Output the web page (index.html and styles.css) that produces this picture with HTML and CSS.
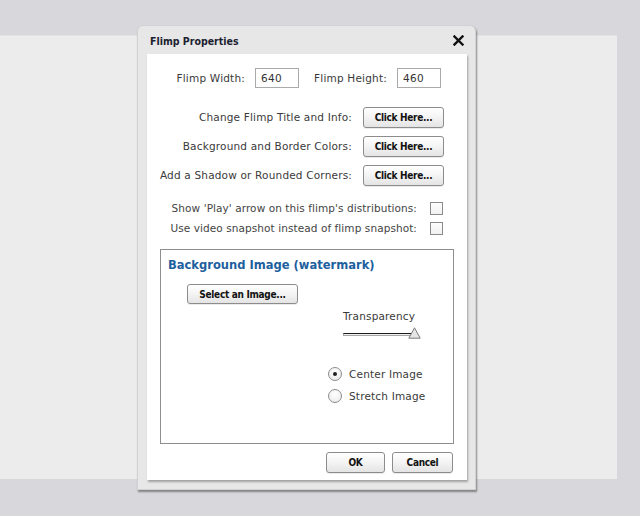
FILE: index.html
```html
<!DOCTYPE html>
<html>
<head>
<meta charset="utf-8">
<title>Flimp Properties</title>
<link rel="stylesheet" href="styles.css">
</head>
<body>
<div class="stage"></div>

<div class="dialog">
  <div class="titlebar">
    <span class="title">Flimp Properties</span>
    <svg class="close" width="11" height="11" viewBox="0 0 11 11"><path d="M1.5 1.5 L9.5 9.5 M9.5 1.5 L1.5 9.5" stroke="#111" stroke-width="2.4" stroke-linecap="square"/></svg>
  </div>

  <div class="sheet">
    <div class="row row-size">
      <label class="lbl">Flimp Width:</label>
      <input class="num" type="text" value="640">
      <label class="lbl lbl-second">Flimp Height:</label>
      <input class="num" type="text" value="460">
    </div>

    <div class="row row-btn first">
      <span class="lbl">Change Flimp Title and Info:</span>
      <button class="btn btn-click">Click Here...</button>
    </div>
    <div class="row row-btn">
      <span class="lbl">Background and Border Colors:</span>
      <button class="btn btn-click">Click Here...</button>
    </div>
    <div class="row row-btn">
      <span class="lbl">Add a Shadow or Rounded Corners:</span>
      <button class="btn btn-click">Click Here...</button>
    </div>

    <div class="row row-check first">
      <span class="lbl">Show 'Play' arrow on this flimp's distributions:</span>
      <span class="check"></span>
    </div>
    <div class="row row-check">
      <span class="lbl">Use video snapshot instead of flimp snapshot:</span>
      <span class="check"></span>
    </div>

    <div class="watermark">
      <h2 class="wm-title">Background Image (watermark)</h2>
      <button class="btn btn-select">Select an Image...</button>
      <div class="transparency">
        <span class="lbl">Transparency</span>
        <div class="slider">
          <span class="track"></span>
          <svg class="thumb" width="13" height="12" viewBox="0 0 13 12"><path d="M6.5 0.8 L12.2 11.2 L0.8 11.2 Z" fill="#e6e6e6" stroke="#7a7a7a" stroke-width="1" stroke-linejoin="round"/></svg>
        </div>
      </div>
      <div class="radios">
        <div class="radio-row"><span class="radio on"></span><span class="lbl">Center Image</span></div>
        <div class="radio-row"><span class="radio"></span><span class="lbl">Stretch Image</span></div>
      </div>
    </div>

    <div class="footer">
      <button class="btn btn-ok">OK</button>
      <button class="btn btn-cancel">Cancel</button>
    </div>
  </div>
</div>
</body>
</html>
```

FILE: styles.css
```css
html, body {
  margin: 0;
  padding: 0;
}

body {
  width: 640px;
  height: 516px;
  background: #d8d8dc;
  font-family: "DejaVu Sans", Verdana, sans-serif;
  overflow: hidden;
  position: relative;
}

/* light work area behind the modal */
.stage {
  margin-top: 35px;
  width: 617px;
  height: 444px;
  background: #ececec;
  border-top: 1px solid #e2e2e4;
  box-sizing: border-box;
}

/* modal window */
.dialog {
  position: absolute;
  left: 137px;
  top: 25px;
  width: 339px;
  height: 465px;
  box-sizing: border-box;
  background: #e7e7e7;
  border: 1px solid #d2d2d4;
  border-radius: 6px 6px 0 0;
  box-shadow: 1px 2px 2px rgba(0, 0, 0, 0.4);
  display: flex;
  flex-direction: column;
}

.titlebar {
  height: 28px;
  display: flex;
  align-items: center;
  justify-content: space-between;
  padding: 0 11px 0 12px;
}

.title,
.btn,
.wm-title {
  font-family: "DejaVu Sans Condensed", "DejaVu Sans", sans-serif;
  font-stretch: condensed;
  font-weight: bold;
}

.title {
  font-size: 10.5px;
  color: #1b2130;
  margin-top: 1px;
}

.close {
  display: block;
  margin-top: 1px;
}

/* white content sheet */
.sheet {
  margin: 0 8px 0 9px;
  height: 426px;
  background: #fff;
  box-shadow: 1px 2px 2px rgba(0, 0, 0, 0.3);
  display: flex;
  flex-direction: column;
}

.row {
  display: flex;
  align-items: center;
  justify-content: flex-end;
}

.lbl {
  font-size: 10.5px;
  letter-spacing: 0.18px;
  color: #3a3a3a;
  white-space: nowrap;
}

.row-check .lbl {
  letter-spacing: 0.08px;
  color: #444;
}

.row-size {
  margin-top: 14px;
  padding-right: 26px;
  height: 20px;
}

.row-size .lbl {
  letter-spacing: 0.2px;
}

.num {
  width: 44px;
  height: 20px;
  box-sizing: border-box;
  margin: 0 0 0 10px;
  padding: 0 0 0 5px;
  border: 1px solid #aaa;
  font-family: "DejaVu Sans", Verdana, sans-serif;
  font-size: 10.5px;
  letter-spacing: 0.3px;
  color: #333;
  outline: none;
}

.lbl-second {
  margin-left: 15px;
}

.row-btn {
  padding-right: 23px;
  height: 22px;
  margin-top: 7px;
}

.row-btn.first {
  margin-top: 18px;
}

.btn {
  box-sizing: border-box;
  height: 21px;
  padding: 0;
  border: 1px solid #8c8c8c;
  border-radius: 3px;
  background: linear-gradient(#ffffff 0%, #f5f5f5 45%, #e4e4e4 100%);
  box-shadow: 0 1px 0 rgba(0, 0, 0, 0.08);
  font-size: 10px;
  letter-spacing: -0.3px;
  color: #121212;
  cursor: pointer;
}

.btn-click {
  width: 81px;
  margin-left: 11px;
}

.row-check {
  padding-right: 24px;
  height: 14px;
  margin-top: 6px;
}

.row-check.first {
  margin-top: 15px;
}

.check {
  width: 13px;
  height: 13px;
  box-sizing: border-box;
  margin-left: 13px;
  border: 1px solid #8a8a8a;
  background: linear-gradient(#fdfdfd, #f1f1f1);
}

/* background image group */
.watermark {
  margin: 14px 13px 0 13px;
  height: 195px;
  box-sizing: border-box;
  border: 1px solid #8e8e8e;
  display: flex;
  flex-direction: column;
  align-items: flex-start;
}

.wm-title {
  margin: 7px 0 0 7px;
  font-size: 12.8px;
  line-height: 15px;
  color: #1e5f9e;
}

.btn-select {
  width: 111px;
  height: 20px;
  margin: 12px 0 0 26px;
}

.transparency {
  margin: 6px 0 0 182px;
  display: flex;
  flex-direction: column;
}

.slider {
  position: relative;
  width: 78px;
  height: 14px;
  margin-top: 4px;
}

.track {
  display: block;
  margin-top: 7px;
  width: 72px;
  height: 3px;
  box-sizing: border-box;
  border: 1px solid #a5a5a5;
  border-top: 1px solid #1a1a1a;
  background: #f2f2f2;
}

.thumb {
  position: absolute;
  left: 65px;
  top: 1px;
}

.radios {
  margin: 27px 0 0 167px;
  display: flex;
  flex-direction: column;
  gap: 8px;
}

.radio-row {
  display: flex;
  align-items: center;
  gap: 7px;
}

.radio {
  width: 14px;
  height: 14px;
  box-sizing: border-box;
  border: 1px solid #8c8c8c;
  border-radius: 50%;
  background: radial-gradient(circle at 50% 35%, #ffffff, #e9e9e9);
  position: relative;
}

.radio.on::after {
  content: "";
  position: absolute;
  left: 4px;
  top: 4px;
  width: 4px;
  height: 4px;
  border-radius: 50%;
  background: #222;
}

.footer {
  display: flex;
  justify-content: flex-end;
  gap: 7px;
  padding-right: 14px;
  margin-top: 8px;
}

.btn-ok {
  width: 59px;
}

.btn-cancel {
  width: 61px;
}
```
